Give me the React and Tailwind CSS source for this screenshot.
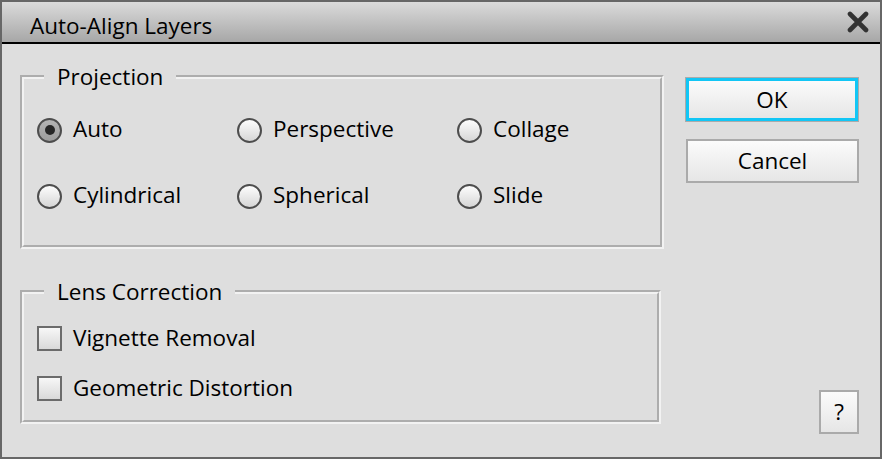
import React from "react";

function Radio({ checked }) {
  return (
    <div
      className={
        "w-[25px] h-[25px] rounded-full border-2 border-[#4d4d4d] flex items-center justify-center shrink-0 " +
        (checked
          ? "bg-gradient-to-b from-[#b4b4b4] to-[#9c9c9c]"
          : "bg-gradient-to-b from-[#fdfdfd] to-[#d6d6d6]")
      }
    >
      {checked && <div className="w-[10px] h-[10px] rounded-full bg-[#262626]" />}
    </div>
  );
}

function RadioItem({ label, checked }) {
  return (
    <div className="flex items-center h-[26px]">
      <Radio checked={checked} />
      <span className="ml-[11px] mb-[2px] leading-[24px]">{label}</span>
    </div>
  );
}

function CheckItem({ label }) {
  return (
    <div className="flex items-center h-[25px]">
      <div className="w-[25px] h-[25px] border-2 border-[#6b6b6b] bg-gradient-to-b from-[#f7f7f7] to-[#d9d9d9] shrink-0" />
      <span className="ml-[11px] mb-[2px] leading-[24px]">{label}</span>
    </div>
  );
}

function Group({ legend, className, innerClassName, children }) {
  return (
    <div
      className={
        "relative border-2 border-t-[#adadad] border-l-[#adadad] border-b-[#f2f2f2] border-r-[#f2f2f2] " +
        className
      }
    >
      <div
        className={
          "h-full border-2 border-t-[#f2f2f2] border-l-[#f2f2f2] border-b-[#adadad] border-r-[#adadad] " +
          innerClassName
        }
      >
        {children}
      </div>
      <span className="absolute left-[22px] -top-[12px] px-[13px] bg-[#dedede] leading-[24px]">
        {legend}
      </span>
    </div>
  );
}

function Button({ children, focused, className }) {
  return (
    <div
      className={
        "flex items-center justify-center bg-gradient-to-b from-[#fbfbfb] to-[#e6e6e6] leading-[24px] " +
        (focused
          ? "border-[3px] border-[#12c6f5] outline outline-1 outline-[#ababab] "
          : "border-2 border-[#aaaaaa] ") +
        className
      }
    >
      {children}
    </div>
  );
}

export default function App() {
  return (
    <div
      className="w-[882px] h-[459px] border-2 border-[#676767] bg-[#dedede] flex flex-col text-black text-[22.5px] overflow-hidden"
      style={{ fontFamily: '"Open Sans", "Noto Sans", sans-serif' }}
    >
      <div className="h-[42px] shrink-0 border-b-2 border-black bg-gradient-to-b from-[#dbdbdb] to-[#a7a7a7] flex items-start justify-between">
        <span className="pl-[28px] pt-[12px] leading-[24px]">Auto-Align Layers</span>
        <svg width="22" height="22" viewBox="0 0 22 22" className="mt-[9px] mr-[11px]">
          <path d="M3 3 L19 19 M19 3 L3 19" stroke="#333333" strokeWidth="4.6" strokeLinecap="round" />
        </svg>
      </div>
      <div className="flex-1 flex pl-[18px] pb-[23px]">
        <div className="flex flex-col pt-[31px]">
          <Group legend="Projection" className="w-[644px] h-[174px]" innerClassName="pl-[13px] pt-[38px]">
            <div className="grid grid-cols-[200px_220px_1fr] gap-y-[40px]">
              <RadioItem label="Auto" checked />
              <RadioItem label="Perspective" />
              <RadioItem label="Collage" />
              <RadioItem label="Cylindrical" />
              <RadioItem label="Spherical" />
              <RadioItem label="Slide" />
            </div>
          </Group>
          <Group legend="Lens Correction" className="mt-[41px] w-[641px] h-[134px]" innerClassName="pl-[13px] pt-[32px]">
            <div className="flex flex-col gap-[25px]">
              <CheckItem label="Vignette Removal" />
              <CheckItem label="Geometric Distortion" />
            </div>
          </Group>
        </div>
        <div className="ml-[22px] flex flex-col pt-[34px] w-[173px]">
          <Button focused className="h-[43px] w-[172px]">OK</Button>
          <Button className="mt-[18px] h-[44px] w-[173px]">Cancel</Button>
          <Button className="mt-auto self-end w-[40px] h-[44px]">?</Button>
        </div>
      </div>
    </div>
  );
}
